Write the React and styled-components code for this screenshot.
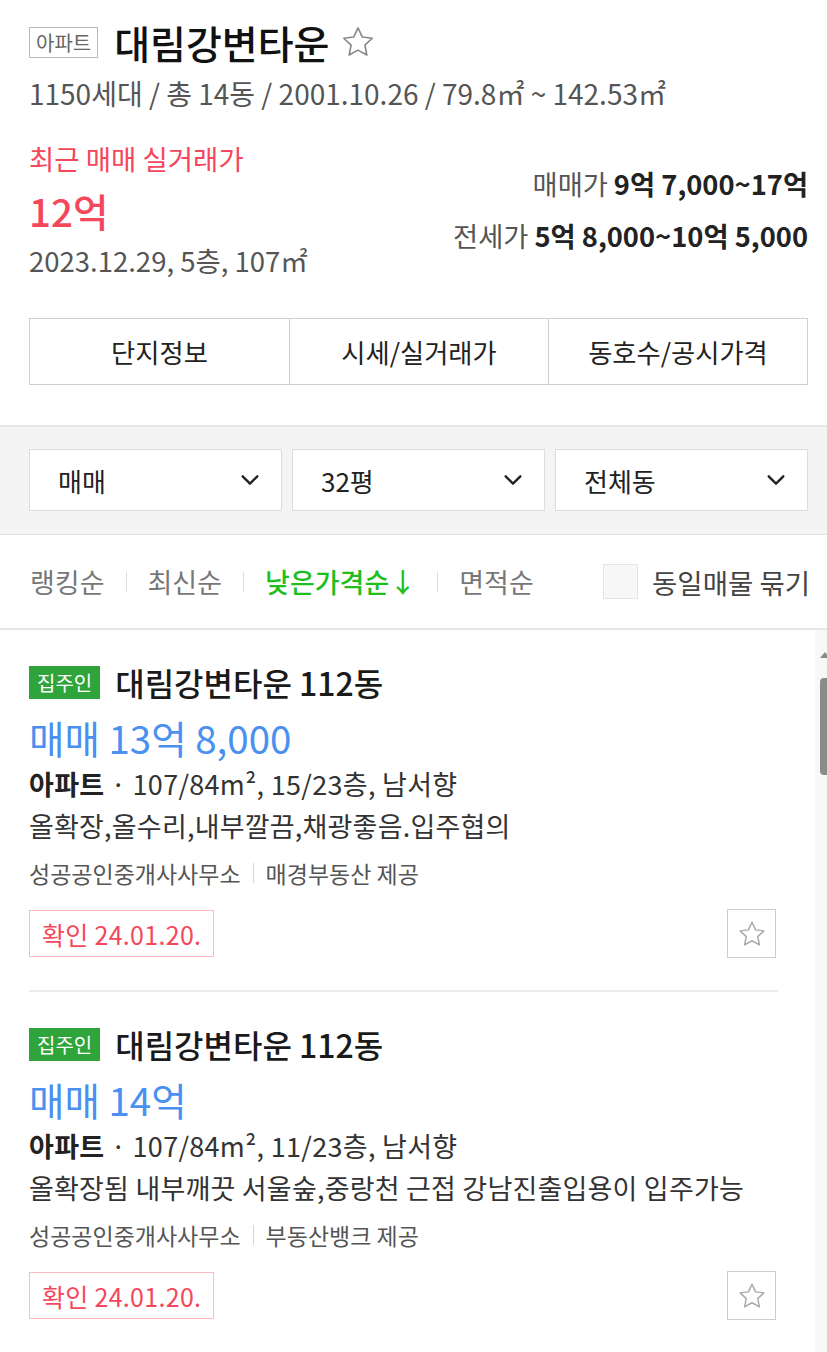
import React from 'react';
import styled, { createGlobalStyle } from 'styled-components';

const GlobalStyle = createGlobalStyle`
  html, body {
    margin: 0;
    padding: 0;
    background: #fff;
  }
  body {
    font-family: "Noto Sans CJK KR", "Noto Sans", sans-serif;
    color: #222;
    overflow: hidden;
  }
  * { box-sizing: border-box; }
`;

const Page = styled.div`
  width: 827px;
  height: 1352px;
  display: flex;
  flex-direction: column;
  overflow: hidden;
  background: #fff;
`;

const Header = styled.section`
  padding: 20px 19px 0 29px;
`;

const TitleRow = styled.div`
  display: flex;
  align-items: center;
  height: 44px;
`;

const TypeBadge = styled.span`
  display: inline-flex;
  align-items: center;
  height: 31px;
  padding: 0 6px;
  border: 1px solid #b9b9b9;
  font-size: 20px;
  color: #666;
  margin-right: 16px;
`;

const Title = styled.h1`
  margin: 0 11px 0 0;
  font-size: 39px;
  font-weight: 500;
  color: #111;
  line-height: 44px;
`;

const InfoLine = styled.div`
  margin-top: 12px;
  font-size: 28px;
  color: #555;
  line-height: 34px;
`;

const PriceSection = styled.div`
  display: flex;
  justify-content: space-between;
  margin-top: 29px;
`;

const RecentCol = styled.div`
  display: flex;
  flex-direction: column;
`;

const RecentLabel = styled.div`
  font-size: 27.5px;
  color: #f5475c;
  line-height: 38px;
`;

const RecentPrice = styled.div`
  margin-top: 8px;
  font-size: 38.5px;
  font-weight: 500;
  color: #f5475c;
  line-height: 50px;
`;

const RecentDate = styled.div`
  margin-top: 7px;
  font-size: 27.5px;
  color: #555;
  line-height: 36px;
`;

const RangeCol = styled.div`
  display: flex;
  flex-direction: column;
  align-items: flex-end;
  gap: 16px;
  padding-top: 26px;
`;

const RangeRow = styled.div`
  font-size: 27.3px;
  line-height: 36px;
  color: #555;
  b {
    font-weight: 700;
    color: #222;
    margin-left: 6px;
  }
`;

const Tabs = styled.div`
  display: grid;
  grid-template-columns: repeat(3, 1fr);
  margin-top: 40px;
  height: 67px;
  border: 1px solid #cfcfcf;
`;

const Tab = styled.button`
  border: none;
  border-left: ${p => (p.$first ? 'none' : '1px solid #cfcfcf')};
  background: #fff;
  font-family: inherit;
  font-size: 26.3px;
  color: #222;
  cursor: pointer;
`;

const FilterBand = styled.div`
  margin-top: 40px;
  background: #f4f4f4;
  border-top: 2px solid #e6e6e6;
  border-bottom: 1px solid #e2e2e2;
  padding: 22px 19px 23px 29px;
  display: grid;
  grid-template-columns: 1fr 1fr 1fr;
  gap: 10px;
`;

const Select = styled.div`
  height: 62px;
  background: #fff;
  border: 1px solid #dcdcdc;
  display: flex;
  align-items: center;
  justify-content: space-between;
  padding: 0 20px 0 28px;
  font-size: 26px;
  color: #222;
`;

const SortRow = styled.div`
  height: 95px;
  display: flex;
  align-items: center;
  padding: 0 17px 0 30px;
  border-bottom: 2px solid #e6e6e6;
`;

const SortItem = styled.span`
  font-size: 27px;
  color: ${p => (p.$active ? '#1fbe1f' : '#777')};
  font-weight: ${p => (p.$active ? 500 : 400)};
`;

const SortDivider = styled.span`
  width: 1px;
  height: 20px;
  background: #ddd;
  margin: 0 21px;
`;

const Bundle = styled.label`
  margin-left: auto;
  display: flex;
  align-items: center;
  gap: 14px;
  font-size: 27.5px;
  color: #444;
`;

const CheckBox = styled.span`
  width: 35px;
  height: 35px;
  border: 1px solid #e4e4e4;
  background: #f7f7f7;
`;

const ListArea = styled.div`
  flex: 1;
  display: flex;
  min-height: 0;
`;

const ListContent = styled.div`
  flex: 1;
  padding: 0 37px 0 29px;
`;

const Item = styled.article`
  padding: 35px 0 32px;
  border-bottom: ${p => (p.$last ? 'none' : '2px solid #ececec')};
`;

const ItemHead = styled.div`
  display: flex;
  align-items: center;
  gap: 15px;
  height: 34px;
`;

const OwnerBadge = styled.span`
  display: inline-flex;
  align-items: center;
  height: 33px;
  padding: 0 8px;
  background: #2ea43a;
  color: #fff;
  font-size: 20px;
`;

const ItemTitle = styled.h2`
  margin: 0;
  font-size: 32px;
  font-weight: 500;
  color: #1a1a1a;
  line-height: 34px;
`;

const ItemPrice = styled.div`
  margin-top: 15px;
  font-size: 38.5px;
  color: #4a90f0;
  line-height: 46px;
`;

const Spec = styled.div`
  margin-top: 6px;
  font-size: 27px;
  color: #333;
  line-height: 36px;
  letter-spacing: 0.3px;
  b {
    font-weight: 700;
    color: #222;
  }
`;

const Desc = styled.div`
  margin-top: 6px;
  font-size: 27px;
  color: #333;
  line-height: 36px;
  letter-spacing: 0.2px;
`;

const Agent = styled.div`
  margin-top: 13px;
  display: flex;
  align-items: center;
  font-size: 23px;
  color: #555;
  line-height: 32px;
`;

const AgentBar = styled.span`
  width: 1px;
  height: 20px;
  background: #d5d5d5;
  margin: 0 12px;
`;

const ItemFoot = styled.div`
  margin-top: 20px;
  display: flex;
  align-items: center;
  justify-content: space-between;
`;

const Confirm = styled.span`
  display: inline-flex;
  align-items: center;
  height: 47px;
  padding: 0 12px;
  border: 1px solid #ffb7c1;
  color: #f5475c;
  font-size: 25px;
  letter-spacing: 0.3px;
`;

const StarButton = styled.button`
  width: 49px;
  height: 49px;
  border: 1px solid #cdcdcd;
  background: #fff;
  display: flex;
  align-items: center;
  justify-content: center;
  padding: 0;
  margin-right: 2px;
`;

const ScrollTrack = styled.div`
  width: 12px;
  background: #f8f8f8;
  display: flex;
  flex-direction: column;
  align-items: flex-end;
  padding-top: 22px;
`;

const ScrollArrow = styled.span`
  width: 0;
  height: 0;
  border-left: 5px solid transparent;
  border-right: 5px solid transparent;
  border-bottom: 6px solid #8a8a8a;
  margin-right: -3px;
`;

const ScrollThumb = styled.span`
  margin-top: 20px;
  width: 7px;
  height: 97px;
  background: #8b8b8b;
  border-radius: 4px 0 0 4px;
`;

const Star = ({ size = 24, color = '#999', width = 1.4 }) => (
  <svg width={size} height={size} viewBox="0 0 24 24" fill="none">
    <path
      d="M12 2.6l2.9 6.1 6.6.8-4.9 4.6 1.3 6.6L12 17.4l-5.9 3.3 1.3-6.6-4.9-4.6 6.6-.8z"
      stroke={color}
      strokeWidth={width}
      strokeLinejoin="round"
    />
  </svg>
);

const Chevron = () => (
  <svg width="22" height="22" viewBox="0 0 24 24" fill="none">
    <path d="M4 8l8 8 8-8" stroke="#222" strokeWidth="2.6" strokeLinecap="round" strokeLinejoin="round" />
  </svg>
);

const listings = [
  {
    price: '매매 13억 8,000',
    floor: '15/23층',
    desc: '올확장,올수리,내부깔끔,채광좋음.입주협의',
    source: '매경부동산 제공',
  },
  {
    price: '매매 14억',
    floor: '11/23층',
    desc: '올확장됨 내부깨끗 서울숲,중랑천 근접 강남진출입용이 입주가능',
    source: '부동산뱅크 제공',
  },
];

const App = () => {
  return (
    <Page>
      <GlobalStyle />
      <Header>
        <TitleRow>
          <TypeBadge>아파트</TypeBadge>
          <Title>대림강변타운</Title>
          <Star size={36} color="#888" width={1.1} />
        </TitleRow>
        <InfoLine>1150세대 / 총 14동 / 2001.10.26 / 79.8㎡ ~ 142.53㎡</InfoLine>
        <PriceSection>
          <RecentCol>
            <RecentLabel>최근 매매 실거래가</RecentLabel>
            <RecentPrice>12억</RecentPrice>
            <RecentDate>2023.12.29, 5층, 107㎡</RecentDate>
          </RecentCol>
          <RangeCol>
            <RangeRow>매매가<b>9억 7,000~17억</b></RangeRow>
            <RangeRow>전세가<b>5억 8,000~10억 5,000</b></RangeRow>
          </RangeCol>
        </PriceSection>
        <Tabs>
          <Tab $first>단지정보</Tab>
          <Tab>시세/실거래가</Tab>
          <Tab>동호수/공시가격</Tab>
        </Tabs>
      </Header>

      <FilterBand>
        <Select>매매<Chevron /></Select>
        <Select>32평<Chevron /></Select>
        <Select>전체동<Chevron /></Select>
      </FilterBand>

      <SortRow>
        <SortItem>랭킹순</SortItem>
        <SortDivider />
        <SortItem>최신순</SortItem>
        <SortDivider />
        <SortItem $active>낮은가격순↓</SortItem>
        <SortDivider />
        <SortItem>면적순</SortItem>
        <Bundle>
          <CheckBox />
          동일매물 묶기
        </Bundle>
      </SortRow>

      <ListArea>
        <ListContent>
          {listings.map((item, i) => (
            <Item key={i} $last={i === listings.length - 1}>
              <ItemHead>
                <OwnerBadge>집주인</OwnerBadge>
                <ItemTitle>대림강변타운 112동</ItemTitle>
              </ItemHead>
              <ItemPrice>{item.price}</ItemPrice>
              <Spec><b>아파트</b> · 107/84m², {item.floor}, 남서향</Spec>
              <Desc>{item.desc}</Desc>
              <Agent>
                성공공인중개사사무소
                <AgentBar />
                {item.source}
              </Agent>
              <ItemFoot>
                <Confirm>확인 24.01.20.</Confirm>
                <StarButton>
                  <Star size={30} color="#aaa" width={1.2} />
                </StarButton>
              </ItemFoot>
            </Item>
          ))}
        </ListContent>
        <ScrollTrack>
          <ScrollArrow />
          <ScrollThumb />
        </ScrollTrack>
      </ListArea>
    </Page>
  );
};

export default App;
